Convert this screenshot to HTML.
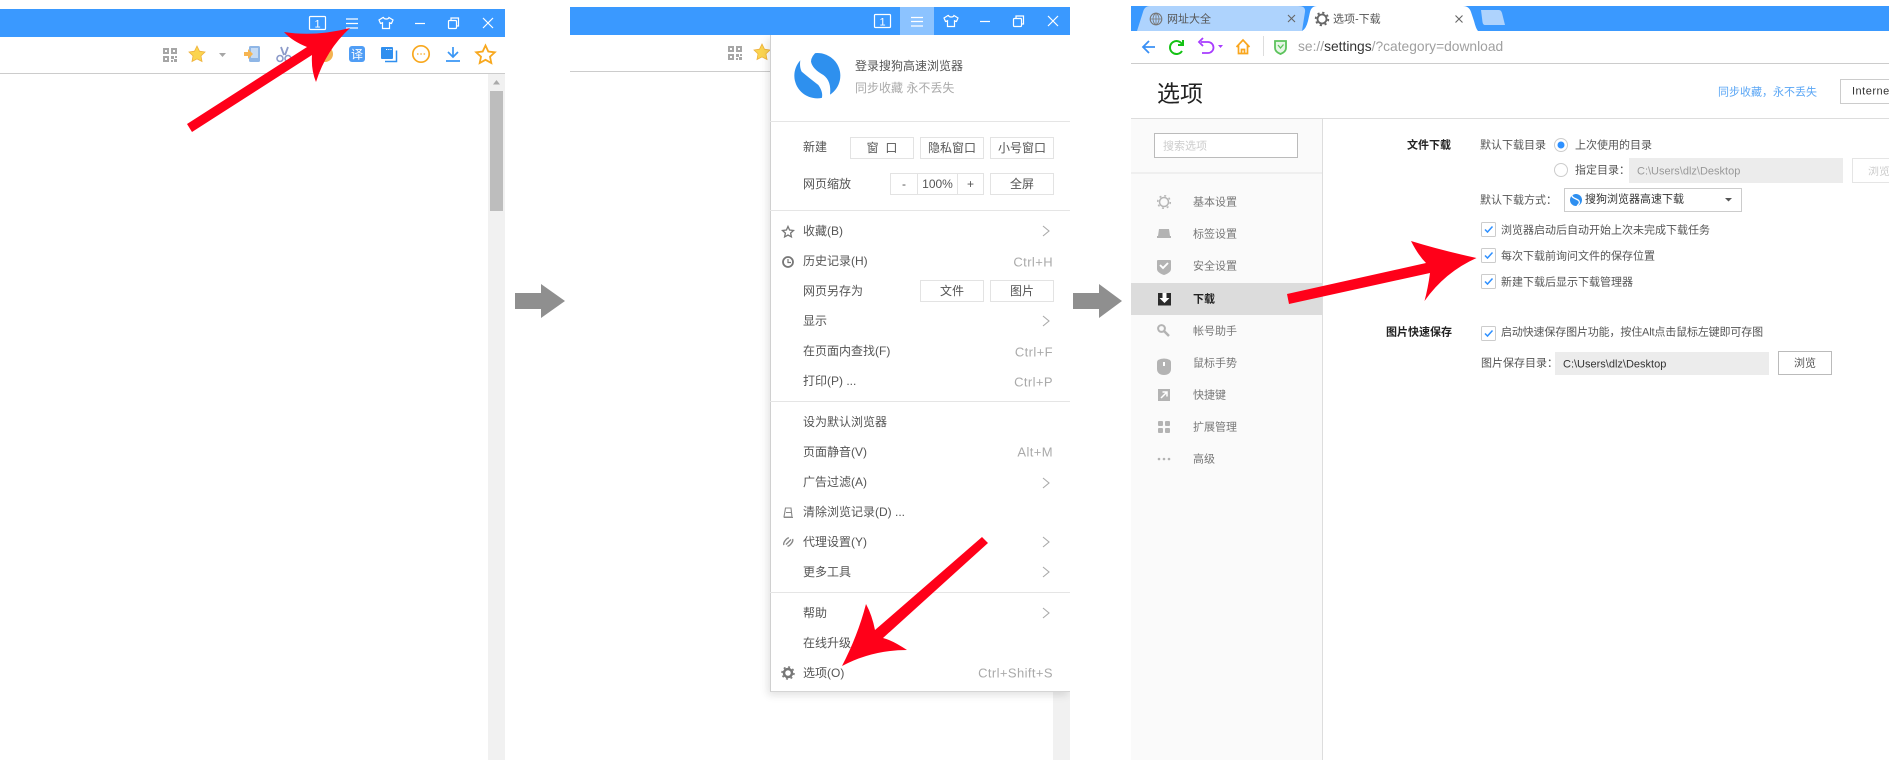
<!DOCTYPE html>
<html lang="zh"><head><meta charset="utf-8"><title>选项</title>
<style>
html,body{margin:0;padding:0;background:#fff;width:1900px;height:760px;overflow:hidden}
body{position:relative;font-family:"Liberation Sans","Noto Sans CJK SC",sans-serif;font-size:12px;color:#555}
.b,.t,svg{position:absolute}
.t{white-space:nowrap;line-height:1;transform:translateY(-50%);filter:blur(.25px)}
.r{transform:translate(-100%,-50%);color:#aaa;font-size:13px;letter-spacing:.4px}
.btn{position:absolute;box-sizing:border-box;border:1px solid #e3e3e3;text-align:center;background:#fff;white-space:nowrap;color:#555}
.s{font-size:11px;color:#777}
.m{font-size:11px;color:#555}
.k{font-size:11px;font-weight:bold;color:#222}
</style></head><body>

<!-- panel 1 -->
<div class="b" style="left:0;top:9px;width:505px;height:28px;background:#3a99ff"></div>
<div class="b" style="left:0;top:73px;width:505px;height:1px;background:#ccc"></div>
<div class="b" style="left:488px;top:74px;width:17px;height:686px;background:#f1f1f1"></div>
<div class="b" style="left:490px;top:91px;width:13px;height:120px;background:#bdbdbd"></div>

<!-- panel 2 -->
<div class="b" style="left:570px;top:7px;width:500px;height:28px;background:#3a99ff"></div>
<div class="b" style="left:900px;top:7px;width:34px;height:28px;background:#8cc3ff"></div>
<div class="b" style="left:570px;top:71px;width:200px;height:1px;background:#ccc"></div>
<div class="b" style="left:1053px;top:690px;width:17px;height:70px;background:#f1f1f1"></div>

<svg style="left:0;top:0" width="1900" height="760" viewBox="0 0 1900 760" fill="none">
<!-- panel 1 window icons -->
<g stroke="#fff" stroke-width="1.2">
<rect x="309.500" y="16.500" width="16" height="13" rx="1"/>
<path d="M346 19h12M346 23.500h12M346 28h12"/>
<path d="M383 17.500l-4 2.500 1.500 3.500 2-.8v5.800h7v-5.800l2 .8 1.500-3.500-4-2.500c-.7 2-4.800 2-5.500 0z"/>
<path d="M415 23.500h10"/>
<rect x="448.500" y="20.500" width="8" height="8" rx="1"/>
<path d="M451 20v-2h7.500v8h-2"/>
<path d="M483 18l10 10M493 18l-10 10"/>
<!-- panel 2 window icons -->
<rect x="874.500" y="14.500" width="16" height="13" rx="1"/>
<path d="M911 17.500h12M911 21.500h12M911 26h12"/>
<path d="M948 15.500l-4 2.500 1.500 3.500 2-.8v5.800h7v-5.800l2 .8 1.500-3.500-4-2.500c-.7 2-4.800 2-5.500 0z"/>
<path d="M980 21.500h10"/>
<rect x="1013.500" y="18.500" width="8" height="8" rx="1"/>
<path d="M1016 18v-2h7.500v8h-2"/>
<path d="M1048 16l10 10M1058 16l-10 10"/>
</g>
<text x="314.500" y="27.500" font-size="11" fill="#fff" font-family="Liberation Sans">1</text>
<text x="879.500" y="25.500" font-size="11" fill="#fff" font-family="Liberation Sans">1</text>
<!-- panel 1 toolbar -->
<g fill="#a6a6a6">
<path fill-rule="evenodd" d="M163 48h6v6h-6zM165 50v2h2v-2zM171 48h6v6h-6zM173 50v2h2v-2zM163 56h6v6h-6zM165 58v2h2v-2zM171 56h3v3h-3zM175 56h2v2h-2zM174 59h3v3h-3zM171 60h2v2h-2z"/>
<path d="M219 53h7l-3.500 4z"/>
<path fill-rule="evenodd" d="M728 46h6v6h-6zM730 48v2h2v-2zM736 46h6v6h-6zM738 48v2h2v-2zM728 54h6v6h-6zM730 56v2h2v-2zM736 54h3v3h-3zM740 54h2v2h-2zM739 57h3v3h-3zM736 58h2v2h-2z"/>
</g>
<path d="M197 46l2.500 5.200 5.500.8-4 3.900 1 5.600-5-2.600-5 2.600 1-5.600-4-3.900 5.500-.8z" fill="#fbd44f" stroke="#eeb13c" stroke-width=".8"/>
<path d="M762 44l2.500 5.200 5.500.8-4 3.900 1 5.600-5-2.600-5 2.600 1-5.600-4-3.900 5.500-.8z" fill="#fbd44f" stroke="#eeb13c" stroke-width=".8"/>
<rect x="249" y="46" width="11" height="16" rx="1.500" fill="#8fb6e6"/>
<rect x="251" y="48" width="7" height="10" fill="#c6dbf4"/>
<path d="M244 52h4v-3l5 5-5 5v-3h-4z" fill="#f6b552"/>
<path d="M281 47l3 8M288 47l-3 8" stroke="#8c9ac9" stroke-width="1.800"/>
<circle cx="280" cy="58.500" r="3" stroke="#8c9ac9" stroke-width="1.600"/><circle cx="288" cy="58.500" r="3" stroke="#8c9ac9" stroke-width="1.600"/>
<circle cx="325" cy="54" r="8" fill="#f3b351"/>
<rect x="349" y="46" width="16" height="16" rx="3" fill="#4f9df5"/>
<text x="351" y="58.500" font-size="12" fill="#fff" font-family="Noto Sans CJK SC">译</text>
<rect x="381" y="47" width="12" height="12" rx="1" fill="#2f8fef"/>
<path d="M385 61.500h11.500v-11" stroke="#2f8fef" stroke-width="1.500"/>
<path d="M386 49.500h6" stroke="#fff" stroke-dasharray="1.200 1"/>
<circle cx="421" cy="54" r="8.200" stroke="#f8a81e" stroke-width="1.700"/>
<path d="M417 54h1.500M420.300 54h1.500M423.600 54h1.500" stroke="#f8a81e" stroke-width="1.300"/>
<path d="M453 47v9.500M448 52l5 5 5-5M446 61h14" stroke="#3a96f5" stroke-width="1.700"/>
<path d="M485.500 45.500l2.800 6 6.500.8-4.800 4.400 1.300 6.300-5.800-3.200-5.800 3.200 1.300-6.300-4.800-4.400 6.500-.8z" stroke="#f8a81e" stroke-width="1.800" fill="#fff"/>
<path d="M496.500 80l3.500 4.500h-7z" fill="#aaa"/>
</svg>

<!-- panel 2 menu -->
<div class="b" style="left:770px;top:35px;width:300px;height:657px;background:#fff;border-left:1px solid #d0d0d0;border-bottom:1px solid #d5d5d5;box-sizing:border-box;box-shadow:-2px 3px 8px rgba(0,0,0,.12);clip-path:inset(0 0 -12px -12px)"></div>
<div class="b" style="left:770px;top:121px;width:300px;height:1px;background:#e5e5e5"></div>
<div class="b" style="left:770px;top:210px;width:300px;height:1px;background:#e5e5e5"></div>
<div class="b" style="left:770px;top:401px;width:300px;height:1px;background:#e5e5e5"></div>
<div class="b" style="left:770px;top:592px;width:300px;height:1px;background:#e5e5e5"></div>

<div class="t" style="left:855px;top:66px;color:#555">登录搜狗高速浏览器</div>
<div class="t" style="left:855px;top:88px;color:#aaa">同步收藏 永不丢失</div>
<div class="t" style="left:803px;top:147px">新建</div>
<div class="btn" style="left:850px;top:137px;width:64px;height:22px;line-height:20px">窗&nbsp;&nbsp;口</div>
<div class="btn" style="left:920px;top:137px;width:64px;height:22px;line-height:20px">隐私窗口</div>
<div class="btn" style="left:990px;top:137px;width:64px;height:22px;line-height:20px">小号窗口</div>
<div class="t" style="left:803px;top:184px">网页缩放</div>
<div class="btn" style="left:890px;top:173px;width:28px;height:22px;line-height:20px">-</div>
<div class="btn" style="left:917px;top:173px;width:41px;height:22px;line-height:20px">100%</div>
<div class="btn" style="left:957px;top:173px;width:27px;height:22px;line-height:20px">+</div>
<div class="btn" style="left:990px;top:173px;width:64px;height:22px;line-height:20px">全屏</div>

<div class="t" style="left:803px;top:231px">收藏(B)</div>
<div class="t" style="left:803px;top:261px">历史记录(H)</div>
<div class="t r" style="left:1053px;top:262px">Ctrl+H</div>
<div class="t" style="left:803px;top:291px">网页另存为</div>
<div class="btn" style="left:920px;top:280px;width:64px;height:22px;line-height:20px">文件</div>
<div class="btn" style="left:990px;top:280px;width:64px;height:22px;line-height:20px">图片</div>
<div class="t" style="left:803px;top:321px">显示</div>
<div class="t" style="left:803px;top:351px">在页面内查找(F)</div>
<div class="t r" style="left:1053px;top:352px">Ctrl+F</div>
<div class="t" style="left:803px;top:381px">打印(P) ...</div>
<div class="t r" style="left:1053px;top:382px">Ctrl+P</div>
<div class="t" style="left:803px;top:422px">设为默认浏览器</div>
<div class="t" style="left:803px;top:452px">页面静音(V)</div>
<div class="t r" style="left:1053px;top:452px">Alt+M</div>
<div class="t" style="left:803px;top:482px">广告过滤(A)</div>
<div class="t" style="left:803px;top:512px">清除浏览记录(D) ...</div>
<div class="t" style="left:803px;top:542px">代理设置(Y)</div>
<div class="t" style="left:803px;top:572px">更多工具</div>
<div class="t" style="left:803px;top:613px">帮助</div>
<div class="t" style="left:803px;top:643px">在线升级</div>
<div class="t" style="left:803px;top:673px">选项(O)</div>
<div class="t r" style="left:1053px;top:673px">Ctrl+Shift+S</div>

<!-- panel 3 backgrounds -->
<div class="b" style="left:1131px;top:6px;width:758px;height:25px;background:#3a99ff"></div>
<div class="b" style="left:1131px;top:63px;width:758px;height:1px;background:#ccc"></div>
<div class="b" style="left:1131px;top:118px;width:758px;height:1px;background:#ddd"></div>
<div class="b" style="left:1131px;top:119px;width:192px;height:641px;background:#fafafa;border-right:1px solid #ddd;box-sizing:border-box"></div>
<div class="b" style="left:1131px;top:172px;width:191px;height:2px;background:#efefef"></div>
<div class="b" style="left:1131px;top:283px;width:191px;height:32px;background:#dcdcdc"></div>
<div class="b" style="left:1154px;top:133px;width:144px;height:25px;box-sizing:border-box;border:1px solid #bbb;background:#fff"></div>
<div class="b" style="left:1629px;top:158px;width:214px;height:25px;background:#ececec"></div>
<div class="b" style="left:1852px;top:158px;width:37px;height:25px;box-sizing:border-box;border:1px solid #e5e5e5;border-right:0"></div>
<div class="b" style="left:1564px;top:188px;width:178px;height:24px;box-sizing:border-box;border:1px solid #ccc"></div>
<div class="b" style="left:1555px;top:352px;width:214px;height:23px;background:#ececec"></div>
<div class="b" style="left:1778px;top:351px;width:54px;height:24px;box-sizing:border-box;border:1px solid #bbb"></div>
<div class="b" style="left:1840px;top:79px;width:49px;height:25px;box-sizing:border-box;border:1px solid #ccc;border-right:0"></div>

<svg style="left:0;top:0" width="1900" height="760" viewBox="0 0 1900 760" fill="none">
<!-- logo -->
<g transform="translate(785 45) scale(.33333)">
<ellipse cx="97" cy="92" rx="69" ry="68" fill="#2e90ee"/>
<path d="M50 18L98 18Q78 33 78 50Q82 72 115 90Q140 108 135 150L108 166Q118 145 100 120Q70 97 50 80Q40 60 50 30z" fill="#fff"/>
</g>
<!-- menu icons -->
<path d="M788 226.500l1.600 3.500 3.900.5-2.900 2.600.8 3.800-3.400-1.900-3.400 1.900.8-3.800-2.900-2.600 3.900-.5z" stroke="#777" stroke-width="1.300"/>
<circle cx="788" cy="262" r="5" stroke="#777" stroke-width="1.800"/><path d="M788 259v3.500h3" stroke="#777" stroke-width="1.200"/>
<path d="M785.500 508h5.500l1 9h-8zM784 517.500h9M786 512.500h5" stroke="#888" stroke-width="1.100"/>
<path d="M784 545c-1.500-2 3-7.500 5-7M792.500 539c1.500 2-3 7.500-5 7M786 544.500l5-5" stroke="#888" stroke-width="1.400"/>
<circle cx="788" cy="673" r="4" stroke="#777" stroke-width="2.500"/>
<circle cx="788" cy="673" r="6" stroke="#777" stroke-width="1.500" stroke-dasharray="2 2.700"/>
<g stroke="#aaa" stroke-width="1.100">
<path d="M1043 226l6 5-6 5M1043 316l6 5-6 5M1043 478l6 5-6 5M1043 537l6 5-6 5M1043 567l6 5-6 5M1043 608l6 5-6 5"/>
</g>
<!-- tabs -->
<path d="M1137 31L1143 12q1.500-6 7-6H1298q8 0 7 6L1302 31z" fill="#aed3fd"/>
<path d="M1302 31q4-2 6-10l2-9q1.500-6 7-6h146q6 0 8 6l3 9q2 8 4 10z" fill="#fff"/>
<path d="M1481 10h18q2 0 3 3l3 12h-20q-2 0-2.500-3z" fill="#aed3fd"/>
<circle cx="1156" cy="19" r="5.800" stroke="#777" stroke-width="1.100"/><path d="M1150 19h12M1156 13v12M1156 13c-4 3-4 9 0 12M1156 13c4 3 4 9 0 12" stroke="#777" stroke-width=".8"/>
<path d="M1288 15l7 7M1295 15l-7 7M1455.500 15.500l7 7M1462.500 15.500l-7 7" stroke="#666" stroke-width="1.100"/>
<circle cx="1322" cy="19" r="4.500" stroke="#666" stroke-width="1.800"/>
<circle cx="1322" cy="19" r="6.300" stroke="#666" stroke-width="1.800" stroke-dasharray="2.200 2.750"/>
<!-- toolbar -->
<path d="M1155 47h-12M1149 41l-6 6 6 6" stroke="#3a90f5" stroke-width="1.800"/>
<path d="M1182 51a6.500 6.500 0 1 1 .5-6M1183 40v5h-5" stroke="#14c214" stroke-width="2"/>
<path d="M1201 42h7a5 5 0 0 1 0 11h-6M1203 38l-4 4 4 4" stroke="#a83cff" stroke-width="1.800"/>
<path d="M1218 45h5l-2.500 3z" fill="#a83cff"/>
<path d="M1236.500 47l6.500-7 6.500 7M1238.500 45v8.500h9V45M1241.500 53.500v-4h3v4" stroke="#f9a61e" stroke-width="1.700"/>
<path d="M1263.500 36v20" stroke="#ddd"/>
<path d="M1275 41h11v7c0 3-3 5-5.500 6-2.500-1-5.500-3-5.500-6z" fill="#e6f6e6" stroke="#5cc35c" stroke-width="1.800"/>
<path d="M1278 45l2.500 3 3-3.500" stroke="#5cc35c" stroke-width="1.300"/>
<!-- sidebar icons -->
<g stroke="#b5b5b5">
<circle cx="1164" cy="202" r="4.500" stroke-width="1.500"/>
<circle cx="1164" cy="202" r="6.300" stroke-width="1.500" stroke-dasharray="2 2.950"/>
</g>
<g fill="#b3b3b3">
<path d="M1159 229h10l1 7h-12z"/><path d="M1157 236h14v2h-14z"/>
<path d="M1158 260h12q1 0 1 1v8c0 3-4 5-7 6-3-1-7-3-7-6v-8q0-1 1-1z"/>
<path d="M1158 360q6-3 12 0q1 1 1 3v6c0 4-3 6-7 6s-7-2-7-6v-6q0-2 1-3z"/>
<rect x="1158" y="389" width="12" height="12" />
<rect x="1158" y="421" width="5" height="5" rx="1"/><rect x="1165" y="421" width="5" height="5" rx="1"/><rect x="1158" y="428" width="5" height="5" rx="1"/><rect x="1165" y="428" width="5" height="5" rx="1"/>
<circle cx="1159" cy="459" r="1.300"/><circle cx="1164" cy="459" r="1.300"/><circle cx="1169" cy="459" r="1.300"/>
</g>
<path d="M1163 362v4" stroke="#fff" stroke-width="2" transform="translate(1 0)"/>
<path d="M1161 398l6-6M1162.500 392h4.500v4.500" stroke="#fff" stroke-width="1.500"/>
<path d="M1160 265l3 3 5-5" stroke="#fff" stroke-width="1.900"/>
<circle cx="1161.500" cy="328.500" r="3.400" stroke="#b3b3b3" stroke-width="2"/><path d="M1164 331l5 5" stroke="#b3b3b3" stroke-width="2.500"/>
<path d="M1158 293h13v12.500h-13z" fill="#2b2b2b"/><path d="M1162.500 293h4v5h3l-5 5-5-5h3z" fill="#fff"/>
<!-- radios -->
<circle cx="1561" cy="145" r="6.500" fill="#fff" stroke="#ccc"/><circle cx="1561" cy="145" r="3.500" fill="#2e90ff"/>
<circle cx="1561" cy="170" r="6.500" fill="#fff" stroke="#ccc"/>
<circle cx="1576" cy="200" r="6" fill="#2e8ff0"/><path d="M1572 195c-1 3 6 4 7 6s0 3-2 5" stroke="#fff" stroke-width="1.300"/>
<path d="M1725 198h7l-3.500 3.500z" fill="#555"/>
<!-- checkboxes -->
<g stroke="#ccc" fill="#fff">
<rect x="1481.500" y="222.500" width="14" height="14" rx="1"/>
<rect x="1481.500" y="248.500" width="14" height="14" rx="1"/>
<rect x="1481.500" y="274.500" width="14" height="14" rx="1"/>
<rect x="1481.500" y="326.500" width="14" height="14" rx="1"/>
</g>
<g stroke="#2e90ff" stroke-width="1.500">
<path d="M1485 229.500l2.500 2.500 5-5.500M1485 255.500l2.500 2.500 5-5.500M1485 281.500l2.500 2.500 5-5.500M1485 333.500l2.500 2.500 5-5.500"/>
</g>
</svg>

<!-- panel 3 text -->
<div class="t" style="left:1167px;top:20px;font-size:11px;color:#555">网址大全</div>
<div class="t" style="left:1333px;top:20px;font-size:11px;color:#555">选项-下载</div>
<div class="t" style="left:1298px;top:47px;font-size:13.800px;color:#a0a0a0">se://<span style="color:#333">settings</span>/?category=download</div>
<div class="t" style="left:1157px;top:94px;font-size:23px;color:#222">选项</div>
<div class="t" style="left:1163px;top:147px;font-size:11px;color:#ccc">搜索选项</div>
<div class="t s" style="left:1193px;top:203px">基本设置</div>
<div class="t s" style="left:1193px;top:235px">标签设置</div>
<div class="t s" style="left:1193px;top:267px">安全设置</div>
<div class="t s" style="left:1193px;top:300px;color:#222;font-weight:bold">下载</div>
<div class="t s" style="left:1193px;top:332px">帐号助手</div>
<div class="t s" style="left:1193px;top:364px">鼠标手势</div>
<div class="t s" style="left:1193px;top:396px">快捷键</div>
<div class="t s" style="left:1193px;top:428px">扩展管理</div>
<div class="t s" style="left:1193px;top:460px">高级</div>
<div class="t" style="left:1718px;top:93px;font-size:11px;color:#5aa6f5">同步收藏，永不丢失</div>
<div class="t" style="left:1852px;top:92px;font-size:11px;letter-spacing:.5px;color:#333;width:37px;overflow:hidden">Internet</div>
<div class="t k" style="left:1407px;top:146px">文件下载</div>
<div class="t m" style="left:1480px;top:146px">默认下载目录</div>
<div class="t m" style="left:1575px;top:146px">上次使用的目录</div>
<div class="t m" style="left:1575px;top:171px">指定目录：</div>
<div class="t" style="left:1637px;top:172px;font-size:11px;color:#999">C:\Users\dlz\Desktop</div>
<div class="t" style="left:1868px;top:172px;font-size:11px;color:#ccc;width:21px;overflow:hidden">浏览</div>
<div class="t m" style="left:1480px;top:201px">默认下载方式：</div>
<div class="t" style="left:1585px;top:200px;font-size:11px;color:#333">搜狗浏览器高速下载</div>
<div class="t m" style="left:1501px;top:231px">浏览器启动后自动开始上次未完成下载任务</div>
<div class="t m" style="left:1501px;top:257px">每次下载前询问文件的保存位置</div>
<div class="t m" style="left:1501px;top:283px">新建下载后显示下载管理器</div>
<div class="t k" style="left:1386px;top:333px">图片快速保存</div>
<div class="t m" style="left:1501px;top:333px;letter-spacing:-.15px">启动快速保存图片功能，按住Alt点击鼠标左键即可存图</div>
<div class="t m" style="left:1481px;top:364px">图片保存目录：</div>
<div class="t" style="left:1563px;top:365px;font-size:11px;color:#333">C:\Users\dlz\Desktop</div>
<div class="t m" style="left:1794px;top:364px">浏览</div>

<!-- overlay arrows -->
<svg style="left:0;top:0" width="1900" height="760" viewBox="0 0 1900 760">
<g fill="#ff0019">
<path d="M515 293h26v-9l24 17-24 17v-9h-26z" fill="#8f8f8f"/>
<path d="M1073 293h26v-9l23 17-23 17v-9h-26z" fill="#8f8f8f"/>
<path d="M350 28Q315 37 284 32Q292 41 307 47L187 124L192 132L312 55Q311 70 316 82Q326 50 350 28z"/>
<path d="M842 666Q872 650 907 650Q892 640 883 638L988 543L982 537L875 630Q872 615 866 604Q858 635 842 666z"/>
<path d="M1476.500 258Q1440 250 1411 241Q1418 255 1426 263L1287 294L1289 304L1430 273Q1428 288 1424.500 301Q1445 272 1476.500 258z"/>
</g>
</svg>
</body></html>
